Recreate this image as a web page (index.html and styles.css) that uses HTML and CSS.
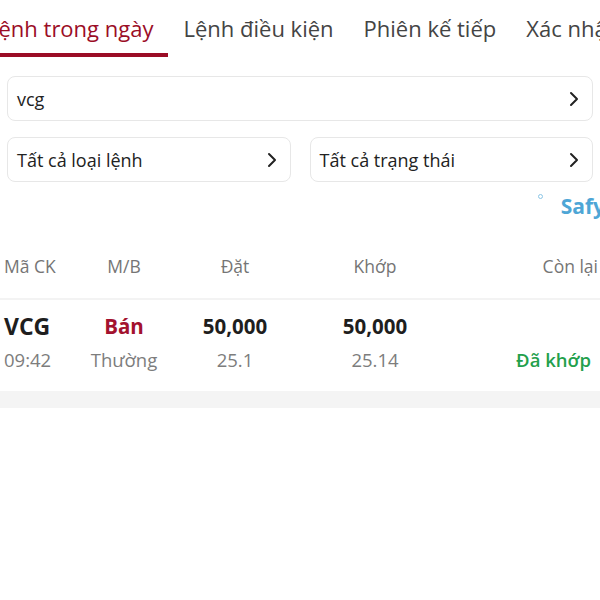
FILE: index.html
```html
<!DOCTYPE html>
<html lang="vi">
<head>
<meta charset="utf-8">
<link rel="stylesheet" href="styles.css">
</head>
<body>
<div class="page">
  <nav class="tabs">
    <div class="tab active">Lệnh trong ngày</div>
    <div class="tab">Lệnh điều kiện</div>
    <div class="tab">Phiên kế tiếp</div>
    <div class="tab">Xác nhận lệnh</div>
  </nav>

  <div class="filters">
    <div class="field full">
      <span class="field-text">vcg</span>
      <svg class="chev" viewBox="0 0 10 16" width="10" height="16"><path d="M2 2 L8 8 L2 14" fill="none" stroke="#222" stroke-width="2" stroke-linecap="round" stroke-linejoin="round"/></svg>
    </div>
    <div class="field-row">
      <div class="field">
        <span class="field-text">Tất cả loại lệnh</span>
        <svg class="chev" viewBox="0 0 10 16" width="10" height="16"><path d="M2 2 L8 8 L2 14" fill="none" stroke="#222" stroke-width="2" stroke-linecap="round" stroke-linejoin="round"/></svg>
      </div>
      <div class="field">
        <span class="field-text">Tất cả trạng thái</span>
        <svg class="chev" viewBox="0 0 10 16" width="10" height="16"><path d="M2 2 L8 8 L2 14" fill="none" stroke="#222" stroke-width="2" stroke-linecap="round" stroke-linejoin="round"/></svg>
      </div>
    </div>
  </div>

  <div class="brand-row">
    <span class="dot"></span>
    <span class="brand">Safy</span>
  </div>

  <div class="table">
    <div class="grid head">
      <div class="c1">Mã CK</div>
      <div class="c2">M/B</div>
      <div class="c3">Đặt</div>
      <div class="c4">Khớp</div>
      <div class="c5">Còn lại</div>
    </div>
    <div class="order">
      <div class="grid main">
        <div class="c1 sym">VCG</div>
        <div class="c2 sell">Bán</div>
        <div class="c3 num">50,000</div>
        <div class="c4 num">50,000</div>
        <div class="c5"></div>
      </div>
      <div class="grid sub">
        <div class="c1">09:42</div>
        <div class="c2">Thường</div>
        <div class="c3">25.1</div>
        <div class="c4">25.14</div>
        <div class="c5 status">Đã khớp</div>
      </div>
    </div>
    <div class="footer-bar"></div>
  </div>
</div>
</body>
</html>
```

FILE: styles.css
```css
* { box-sizing: border-box; }
html, body { margin: 0; padding: 0; background: #fff; }
body {
  font-family: "Open Sans", "Noto Sans", sans-serif;
  color: #222;
  width: 600px;
  height: 600px;
  overflow: hidden;
}
.page { width: 600px; }

.tabs {
  display: flex;
  height: 57px;
  margin-left: -28px;
  white-space: nowrap;
}
.tab {
  flex: none;
  padding: 0 15px;
  font-size: 22px;
  color: #444;
  border-bottom: 4px solid transparent;
  line-height: 56px;
}
.tab.active {
  color: #9b0d26;
  border-bottom-color: #9b0d26;
}

.filters {
  padding: 19px 7px 0;
  display: flex;
  flex-direction: column;
  gap: 16px;
}
.field {
  height: 45px;
  border: 1px solid #e7e7e7;
  border-radius: 8px;
  display: flex;
  align-items: center;
  justify-content: space-between;
  padding: 0 13px 0 9px;
  font-size: 18px;
  color: #222;
}
.field-row {
  display: grid;
  grid-template-columns: 1fr 1fr;
  gap: 19px;
}
.chev { flex: none; }

.brand-row {
  height: 48px;
  display: flex;
  justify-content: flex-end;
  align-items: center;
  margin-right: -5px;
  white-space: nowrap;
}
.dot {
  width: 5px; height: 5px;
  border: 1px solid #8cc6e6;
  border-radius: 50%;
  margin-right: 18px;
  margin-top: -20px;
}
.brand {
  font-size: 21px;
  font-weight: 700;
  color: #4ea6d6;
}

.grid {
  display: grid;
  grid-template-columns: 60px 120px 102px 178px 1fr;
  padding: 0 2px 0 4px;
  align-items: center;
}
.grid .c2, .grid .c3, .grid .c4 { text-align: center; }
.grid .c5 { text-align: right; white-space: nowrap; }

.head {
  height: 70px;
  padding-top: 4px;
  font-size: 17.5px;
  color: #757575;
  border-bottom: 2px solid #f3f3f3;
}
.order { padding: 10px 0 14px; }
.main { height: 31px; font-size: 20.5px; font-weight: 700; color: #1e1e1e; }
.main .sym { font-size: 23px; }
.main .sell { color: #a3122f; }
.sub { height: 36px; font-size: 18.5px; color: #7d7d7d; }
.sub .status { color: #23a04c; padding-right: 7px; font-weight: 600; }

.footer-bar {
  height: 17px;
  background: #f4f4f4;
}
```
